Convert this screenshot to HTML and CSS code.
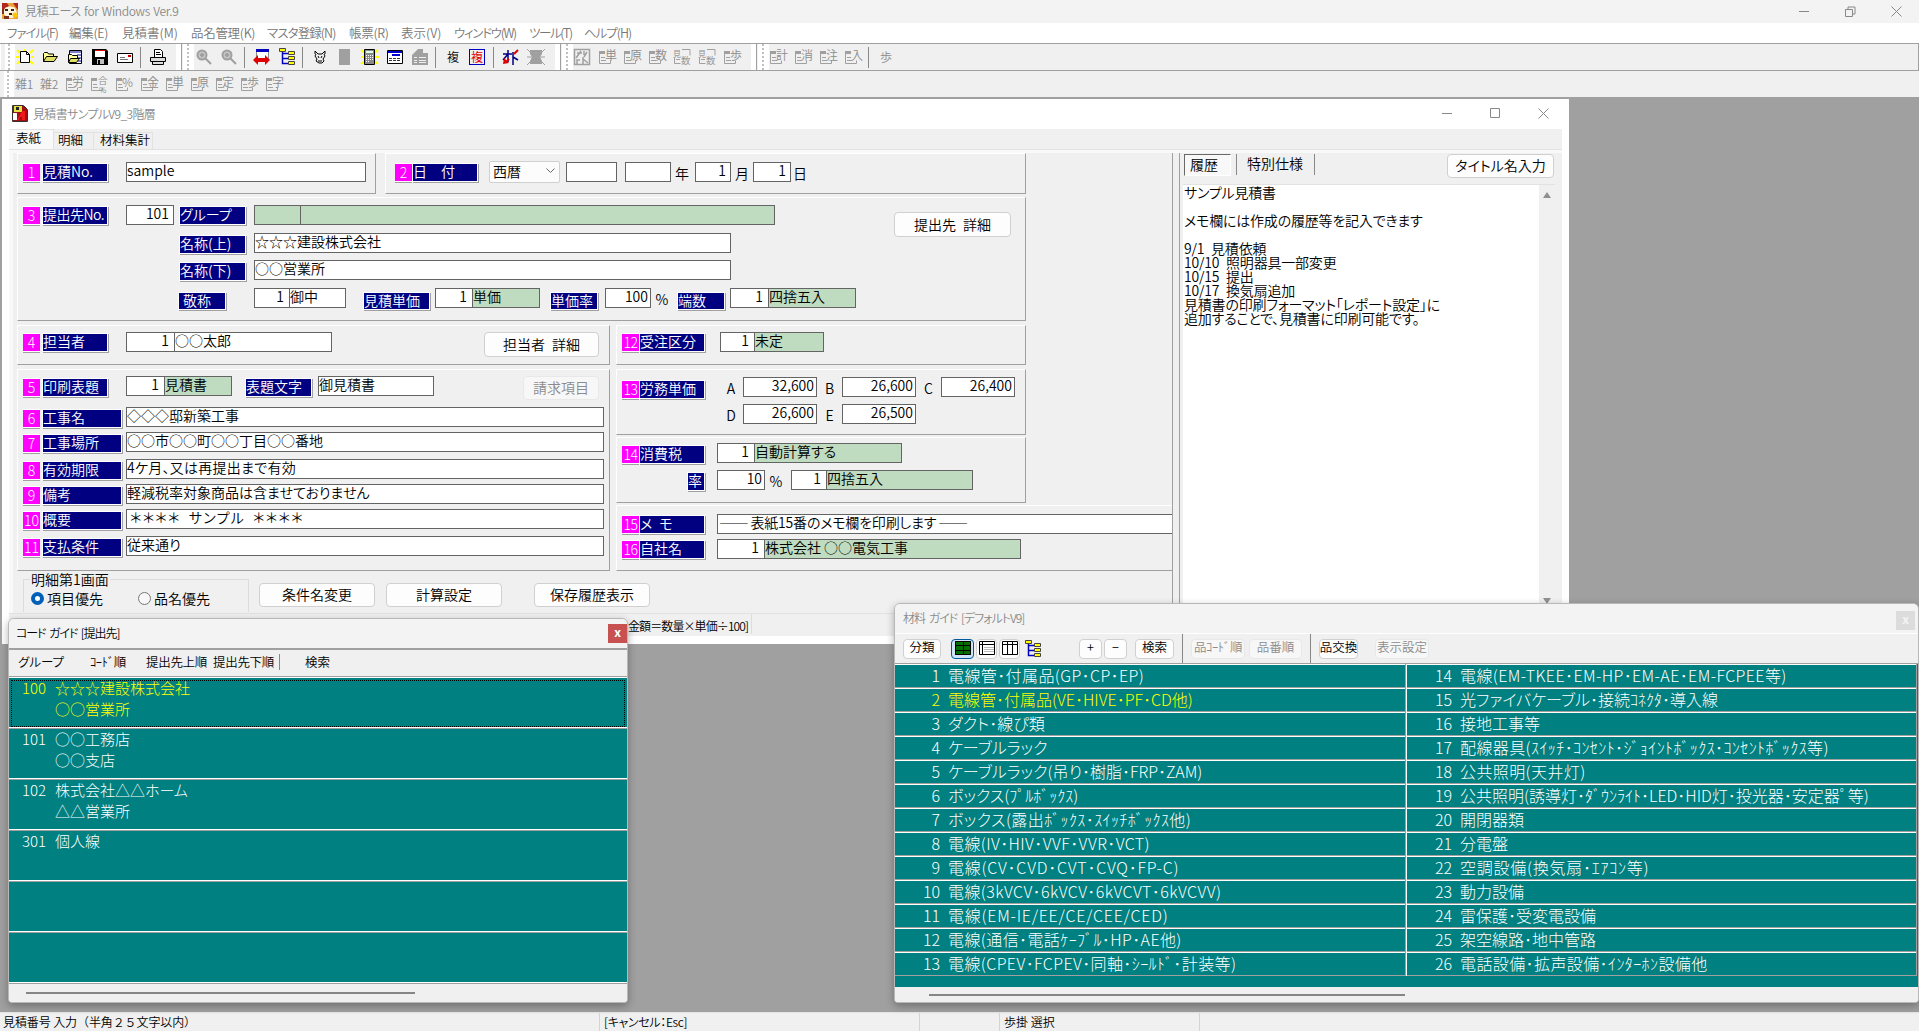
FILE: index.html
```html
<!DOCTYPE html>
<html lang="ja">
<head>
    <meta charset="utf-8">
    <title>見積エース for Windows Ver.9</title>
    <link rel="stylesheet" href="styles.css">
</head>
<body>
    <svg width="0" height="0" class="defs">
        <symbol id="sheet" viewBox="0 0 18 16"><path d="M1.500 3v11.500h11v-3M3 8.500h4M3 11.500h5" fill="none" stroke="#a0a0a0"/><path d="M1 2h6v3H1z" fill="#a0a0a0"/></symbol>
        <symbol id="lens" viewBox="0 0 18 16"><circle cx="7" cy="6" r="4.500" fill="#c4c4c4" stroke="#a0a0a0" stroke-width="2"/><path d="M5 6h4M7 4v4M10 9l6 6" stroke="#a0a0a0" stroke-width="2"/></symbol>
        <symbol id="tree" viewBox="0 0 16 18"><path d="M3.500 4v11.500H9M3.500 5.500H9M3.500 10.500H9" fill="none" stroke="#0000c0" stroke-width="1.500"/><path d="M.5.500h6v3h-6zM9.500 3.500h6v3h-6zM9.500 8.500h6v3h-6zM9.500 13.500h6v3h-6z" fill="#ff0" stroke="#444"/></symbol>
    </svg>

    <header class="titlebar">
        <svg width="16" height="16"><rect width="16" height="16" fill="#e8a33c"/><path d="M0 0h5l2 3L4 5 0 8zM11 0h5v7l-3-4z" fill="#b3261e"/><path d="M3 5c3-2 7-2 10 0l2 5-4 5H5L1 10z" fill="#fff4df"/><path d="M3 6h3v2H3zM9 6h3v2H9zM7 10h3v2H7z" fill="#3a2416"/><path d="M0 6h2v5H0zM2 13h5v3H2z" fill="#803018"/><circle cx="13" cy="12" r="2.500" fill="#ffc400"/></svg>
        <span class="fit-title">見積エース for Windows Ver.9</span>
        <div class="controls">
            <svg width="11" height="11"><path d="M0 5.500h10" stroke="#888"/></svg>
            <svg width="11" height="11"><path d="M.5 3.500h7v7h-7zM3 3V1h7v7H8" fill="none" stroke="#888"/></svg>
            <svg width="11" height="11"><path d="M.5.500l10 10M10.500.500l-10 10" stroke="#888"/></svg>
        </div>
    </header>
    <nav class="menubar">
        <span class="m1">ファイル(F)</span><span class="m2">編集(E)</span><span class="m3">見積書(M)</span><span class="m4">品名管理(K)</span><span class="m5">マスタ登録(N)</span><span class="m6">帳票(R)</span><span class="m7">表示(V)</span><span class="m8">ウィンドウ(W)</span><span class="m9">ツール(T)</span><span class="m10">ヘルプ(H)</span>
    </nav>

    <div class="toolbar">
        <div class="group g1">
            <i class="grip"></i>
            <svg class="ic" viewBox="0 0 18 16"><path d="M1 1l3 3M17 1l-3 3M1 15l3-3M17 15l-3-3M9 0v2M0 8h3M15 8h3" stroke="#ff0" stroke-width="2"/><path d="M4.500 2.500h6l3 3v8h-9zM10.500 2.500v3h3" fill="#fff" stroke="#000"/></svg>
            <svg class="ic" viewBox="0 0 18 16"><path d="M2.500 12.500v-8l1-1h3l1 1.500h5v3" fill="#ffff9c" stroke="#000"/><path d="M2.500 12.500l3-5h11l-3.500 5z" fill="#e0e068" stroke="#000"/></svg>
            <svg class="ic" viewBox="0 0 18 16"><path d="M3.500 1.500h12v13h-12z" fill="#fff" stroke="#000"/><path d="M4 3h11M11 6h4M11 9h4M12 12h3" stroke="#0000a0"/><path d="M2.500 13.500v-8h3l1 1h5v3" fill="#ffff9c" stroke="#000"/><path d="M2.500 13.500l2-4h9l-3 4z" fill="#e0e068" stroke="#000"/></svg>
            <svg class="ic" viewBox="0 0 18 16"><path d="M1 0h14l2 2v14H1z" fill="#000"/><path d="M4 1h10v7H4z" fill="#fff"/><path d="M4 1h10v1H4z" fill="#e00000"/><path d="M6 10h7v5H6z" fill="#c0c0c0"/><path d="M7 11h2v4H7z"/></svg>
            <svg class="ic" viewBox="0 0 18 16"><path d="M1.500 4.500h15v9h-15z" fill="#fff" stroke="#000"/><path d="M4 8.500h5M4 10.500h8" stroke="#777"/><path d="M12 6h3v2h-3z" fill="#c00000"/></svg>
            <i class="sep"></i>
            <svg class="ic" viewBox="0 0 18 16"><path d="M5.500 8.500v-8h6l2 2v6" fill="#fff" stroke="#000"/><path d="M7 3.500h4M7 5.500h5" stroke="#000"/><path d="M1.500 8.500h15v4h-15zM3.500 12.500h11v3h-11z" fill="#ddd" stroke="#000"/></svg>
        </div>
        <div class="group g2">
            <i class="grip"></i>
            <svg class="ic"><use href="#lens"/></svg>
            <svg class="ic"><use href="#lens"/></svg>
            <i class="sep"></i>
            <svg class="ic" viewBox="0 0 18 16"><path d="M3.500.500h12v9h-12z" fill="#fff" stroke="#888"/><path d="M3 0h13v3H3z" fill="#0000c0"/><path d="M0 11l5-5v3h7V6l5 5-5 5v-3H5v3z" fill="#e00000"/></svg>
            <svg class="ic tall"><use href="#tree"/></svg>
            <i class="sep"></i>
            <svg class="ic" viewBox="0 0 18 16"><path d="M4 2l3 3h4l3-3M5 5l-1 2 2 3-1 2 3 2h3l2-2-1-2 2-3-1-2M7 7l1 2M11 7l-1 2M7 12h4M4 2v3M14 2v3" fill="none" stroke="#000"/></svg>
            <svg class="ic" viewBox="0 0 18 16"><path d="M3 0h11v16H3z" fill="#a0a0a0"/></svg>
            <svg class="ic" viewBox="0 0 18 16"><path d="M0 1l17 14M17 1L0 15M0 8h18" stroke="#ff0" stroke-width="2"/><path d="M3.500.500h10v15h-10z" fill="#888" stroke="#000"/><path d="M5 2h7v2H5z" fill="#dfe"/><path d="M5 6.500h7M5 8.500h7M5 10.500h7M5 12.500h3" stroke="#fff" stroke-dasharray="1 1"/></svg>
            <svg class="ic" viewBox="0 0 18 16"><path d="M1.500 1.500h15v13h-15z" fill="#fff" stroke="#000"/><path d="M2 3h14M6 6h8" stroke="#0000d0" stroke-width="2"/><path d="M3 9.500h12M3 11.500h12" stroke="#333" stroke-dasharray="3 1"/></svg>
            <svg class="ic" viewBox="0 0 18 16"><path d="M1 6l6-6h5v4h5v12H1z" fill="#a0a0a0"/><path d="M3 8.500h3M8 8.500h7M3 11.500h3M8 11.500h7M3 13.500h3M8 13.500h7" stroke="#eee"/></svg>
            <i class="sep"></i>
            <span class="kanji">複</span>
            <span class="kanji boxed"><b>複</b></span>
            <i class="sep"></i>
            <svg class="ic" viewBox="0 0 18 16"><path d="M1 5h9M6 1v12M6 5l-5 6M11 3v13M11 8l5 3" stroke="#000080" stroke-width="1.500" fill="none"/><path d="M16 1l-4 4M7 10l-3 3" stroke="#e00000" stroke-width="2"/><path d="M1 15l1-6 5 5z" fill="#e00000"/></svg>
            <svg class="ic" viewBox="0 0 18 16"><path d="M3 1h12v4l-2 3 2 4v3H3v-3l2-4-2-3z" fill="#a0a0a0"/><path d="M0 0l4 4M18 0l-4 4M0 16l4-4M18 16l-4-4M0 8h18" stroke="#a0a0a0"/></svg>
        </div>
        <div class="group g3">
            <i class="grip"></i>
            <svg class="ic" viewBox="0 0 18 16"><path d="M1.500.500h15v15h-15zM4 4h5M8 2L3 9M11 2v4M10 8v7M10 10l5 4M4 15v-4h3M14 3l-3 5" fill="none" stroke="#a0a0a0" stroke-width="1.500"/></svg>
            <svg class="ic"><use href="#sheet"/><text x="7" y="11">単</text></svg>
            <svg class="ic"><use href="#sheet"/><text x="7" y="11">原</text></svg>
            <svg class="ic"><use href="#sheet"/><text x="7" y="11">数</text></svg>
            <svg class="ic"><path d="M9 .5h8v6M1.500 9v5.500h6M3 10.500h4" fill="none" stroke="#a0a0a0"/><text x="0" y="8" class="tiny">見</text><text x="8" y="15" class="small">数</text></svg>
            <svg class="ic"><path d="M9 .5h8v6M1.500 9v5.500h6M3 10.500h4" fill="none" stroke="#a0a0a0"/><text x="0" y="8" class="tiny">見</text><text x="8" y="15" class="small">数</text></svg>
            <svg class="ic"><use href="#sheet"/><text x="7" y="11">歩</text></svg>
        </div>
        <div class="group g4">
            <i class="grip"></i>
            <svg class="ic"><use href="#sheet"/><text x="7" y="11">計</text></svg>
            <svg class="ic"><use href="#sheet"/><text x="7" y="11">消</text></svg>
            <svg class="ic"><use href="#sheet"/><text x="7" y="11">注</text></svg>
            <svg class="ic"><use href="#sheet"/><text x="7" y="11">入</text></svg>
            <i class="sep"></i>
            <span class="kanji off">歩</span>
        </div>
    </div>
    <div class="toolbar second">
        <i class="grip"></i>
        <span class="kanji off wide">雑1</span>
        <span class="kanji off wide">雑2</span>
        <svg class="ic"><use href="#sheet"/><text x="7" y="11">労</text></svg>
        <svg class="ic"><use href="#sheet"/><text x="8" y="8" class="small">合</text><text x="9" y="17" class="tiny">%</text></svg>
        <svg class="ic"><use href="#sheet"/><text x="7" y="11">%</text></svg>
        <svg class="ic"><use href="#sheet"/><text x="7" y="11">金</text></svg>
        <svg class="ic"><use href="#sheet"/><text x="7" y="11">単</text></svg>
        <svg class="ic"><use href="#sheet"/><text x="7" y="11">原</text></svg>
        <svg class="ic"><use href="#sheet"/><text x="7" y="11">定</text></svg>
        <svg class="ic"><use href="#sheet"/><text x="7" y="11">歩</text></svg>
        <svg class="ic"><use href="#sheet"/><text x="7" y="11">字</text></svg>
    </div>

    <main class="desktop">
        <!-- 見積書 -->
        <section class="window estimate">
            <div class="caption">
                <svg width="16" height="17"><path d="M1 1h11l3 3v12H1z" fill="#a01010"/><path d="M2 1h8v6H2z" fill="#e8e040"/><path d="M4 2h3v3H4z" fill="#222"/><path d="M5 15l5-9h3v9h-3v-3H8l-1 3z" fill="#f01818"/><path d="M1 8h4v7H1z" fill="#fff"/><path d="M.5.500h11l4 4v12H.500z" fill="none" stroke="#333"/></svg>
                <span class="fit-doc">見積書サンプルV9_3階層</span>
                <div class="controls">
                    <svg width="11" height="11"><path d="M0 5.500h10" stroke="#888"/></svg>
                    <svg width="11" height="11"><path d="M.5.500h9v9h-9z" fill="none" stroke="#888"/></svg>
                    <svg width="11" height="11"><path d="M.5.500l10 10M10.500.500l-10 10" stroke="#888"/></svg>
                </div>
            </div>
            <div class="tabs">
                <span class="tab active">表紙</span><span class="tab t2">明細</span><span class="tab t3">材料集計</span>
            </div>
            <div class="page">
                <div class="form">
                    <div class="line">
                        <div class="panel p1">
                            <div class="row">
                                <div class="head"><b>1</b><span class="tag w66">見積No.</span></div>
                                <span class="field w240">sample</span>
                            </div>
                        </div>
                        <div class="panel p2">
                            <div class="row">
                                <div class="head date"><b>2</b><span class="tag w66">日&emsp;付</span></div>
                                <span class="combo">西暦<svg width="9" height="6"><path d="M.5.500l4 4 4-4" fill="none" stroke="#666"/></svg></span>
                                <span class="field year"></span>
                                <span class="field year2"></span><span class="unit nen">年</span>
                                <span class="field num w36">1</span><span class="unit">月</span>
                                <span class="field num w38">1</span><span class="unit nichi">日</span>
                            </div>
                        </div>
                    </div>
                    <div class="panel p3">
                        <div class="rows">
                            <div class="row">
                                <div class="head"><b>3</b><span class="tag w66 tight">提出先No.</span></div>
                                <span class="field num client-no">101</span>
                                <span class="tag w67">グループ</span>
                                <span class="pair group-name"><i class="green"></i><em></em></span>
                            </div>
                            <div class="row indent">
                                <span class="tag w67">名称(上)</span>
                                <span class="field w477">☆☆☆建設株式会社</span>
                            </div>
                            <div class="row indent">
                                <span class="tag w67">名称(下)</span>
                                <span class="field w477">○○営業所</span>
                            </div>
                            <div class="row indent terms">
                                <span class="tag w48 center">敬称</span>
                                <span class="pair title-of"><i>1</i><em class="white">御中</em></span>
                                <span class="tag w67">見積単価</span>
                                <span class="pair unit-price"><i>1</i><em>単価</em></span>
                                <span class="tag w48">単価率</span>
                                <span class="field num rate">100</span><span class="unit">%</span>
                                <span class="tag w48">端数</span>
                                <span class="pair rounding"><i>1</i><em>四捨五入</em></span>
                            </div>
                        </div>
                        <button class="btn client-detail">提出先&ensp;詳細</button>
                    </div>
                    <div class="line cols">
                        <div class="col">
                            <div class="panel p4">
                                <div class="row">
                                    <div class="head"><b>4</b><span class="tag w66">担当者</span></div>
                                    <span class="pair person"><i>1</i><em class="white">○○太郎</em></span>
                                    <button class="btn person-detail">担当者&ensp;詳細</button>
                                </div>
                            </div>
                            <div class="panel p5">
                                <div class="row">
                                    <div class="head"><b>5</b><span class="tag w66">印刷表題</span></div>
                                    <span class="pair heading"><i>1</i><em>見積書</em></span>
                                    <span class="tag w67 ml">表題文字</span>
                                    <span class="field heading-text">御見積書</span>
                                    <button class="btn billing" disabled>請求項目</button>
                                </div>
                                <div class="row"><div class="head"><b>6</b><span class="tag w80">工事名</span></div><span class="field w478">◇◇◇邸新築工事</span></div>
                                <div class="row"><div class="head"><b>7</b><span class="tag w80">工事場所</span></div><span class="field w478">○○市○○町○○丁目○○番地</span></div>
                                <div class="row"><div class="head"><b>8</b><span class="tag w80">有効期限</span></div><span class="field w478 term">4ケ月、又は再提出まで有効</span></div>
                                <div class="row"><div class="head"><b>9</b><span class="tag w80">備考</span></div><span class="field w478">軽減税率対象商品は含ませておりません</span></div>
                                <div class="row"><div class="head"><b>10</b><span class="tag w80">概要</span></div><span class="field w478 stars">＊＊＊＊&ensp;サンプル&ensp;＊＊＊＊</span></div>
                                <div class="row"><div class="head"><b>11</b><span class="tag w80">支払条件</span></div><span class="field w478">従来通り</span></div>
                            </div>
                        </div>
                        <div class="col right">
                            <div class="panel p12">
                                <div class="row">
                                    <div class="head"><b>12</b><span class="tag w66">受注区分</span></div>
                                    <span class="pair order"><i>1</i><em>未定</em></span>
                                </div>
                            </div>
                            <div class="panel p13">
                                <div class="head"><b>13</b><span class="tag w66">労務単価</span></div>
                                <div class="labor">
                                    <span>A</span><span class="field num">32,600</span>
                                    <span>B</span><span class="field num">26,600</span>
                                    <span>C</span><span class="field num">26,400</span>
                                    <span>D</span><span class="field num">26,600</span>
                                    <span>E</span><span class="field num">26,500</span>
                                </div>
                            </div>
                            <div class="panel p14">
                                <div class="row">
                                    <div class="head"><b>14</b><span class="tag w66">消費税</span></div>
                                    <span class="pair tax"><i>1</i><em>自動計算する</em></span>
                                </div>
                                <div class="row">
                                    <div class="head rate-head"><span class="tag">率</span></div>
                                    <span class="field num w48">10</span><span class="unit">%</span>
                                    <span class="pair tax-round"><i>1</i><em>四捨五入</em></span>
                                </div>
                            </div>
                            <div class="panel p15">
                                <div class="row">
                                    <div class="head"><b>15</b><span class="tag w66">メ&ensp;モ</span></div>
                                    <span class="field memo-line">── 表紙15番のメモ欄を印刷します ──</span>
                                </div>
                                <div class="row">
                                    <div class="head"><b>16</b><span class="tag w66">自社名</span></div>
                                    <span class="pair company"><i>1</i><em>株式会社 ○○電気工事</em></span>
                                </div>
                            </div>
                        </div>
                    </div>
                    <div class="line foot">
                        <fieldset>
                            <legend>明細第1画面</legend>
                            <label><span class="radio on"></span>項目優先</label>
                            <label><span class="radio"></span>品名優先</label>
                        </fieldset>
                        <button class="btn">条件名変更</button>
                        <button class="btn">計算設定</button>
                        <button class="btn">保存履歴表示</button>
                    </div>
                </div>
                <aside class="notes">
                    <div class="notes-bar">
                        <span class="pressed">履歴</span><span class="plain">特別仕様</span>
                        <button class="btn">タイトル名入力</button>
                    </div>
                    <div class="notes-text">
                        <pre>サンプル見積書

メモ欄には作成の履歴等を記入できます

9/1&ensp;見積依頼
10/10&ensp;照明器具一部変更
10/15&ensp;提出
10/17&ensp;換気扇追加
見積書の印刷フォーマット「レポート設定」に
追加することで、見積書に印刷可能です。</pre>
                        <div class="vbar"><svg width="8" height="6"><path d="M4 0l4 6H0z" fill="#909090"/></svg><svg width="8" height="6"><path d="M4 6l4-6H0z" fill="#909090"/></svg></div>
                    </div>
                </aside>
            </div>
            <div class="sheet-tabs"><span>金額＝数量×単価÷100]</span></div>
        </section>

        <!-- コードガイド -->
        <section class="window code-guide">
            <div class="caption"><span>コード ガイド [提出先]</span><span class="close">x</span></div>
            <div class="bar">
                <span class="c1">グループ</span><span class="c2">ｺｰﾄﾞ順</span><span class="c3">提出先上順</span><span class="c4">提出先下順</span><i class="sep"></i><span class="c5">検索</span>
            </div>
            <div class="list">
                <div class="entry current"><span>100</span><p>☆☆☆建設株式会社<br>○○営業所</p></div>
                <div class="entry"><span>101</span><p>○○工務店<br>○○支店</p></div>
                <div class="entry"><span>102</span><p>株式会社△△ホーム<br>△△営業所</p></div>
                <div class="entry"><span>301</span><p>個人線</p></div>
                <div class="entry"></div>
                <div class="entry"></div>
            </div>
            <div class="hbar"><i></i></div>
        </section>

        <!-- 材料ガイド -->
        <section class="window material">
            <div class="caption"><span>材料 ガイド [デフォルトV9]</span><span class="close">x</span></div>
            <div class="bar">
                <button class="btn b1">分類</button>
                <button class="btn b2"><svg width="16" height="14"><path d="M0 0h16v14H0z" fill="#007000"/><path d="M.5.500h15v13H.500zM0 4.500h16M0 9.500h16M8.500 0v14" fill="none" stroke="#000"/></svg></button>
                <button class="btn b3"><svg width="16" height="14"><path d="M.5.500h15v13H.500zM0 3.500h16M3.500 0v14" fill="#fff" stroke="#000"/><path d="M5 6.500h10M5 8.500h10M5 10.500h10" stroke="#bbb"/></svg></button>
                <button class="btn b4"><svg width="16" height="14"><path d="M.5.500h15v13H.500zM0 3.500h16M5.500 0v14M10.500 0v14" fill="#fff" stroke="#000"/></svg></button>
                <svg class="b5" width="18" height="18"><use href="#tree"/></svg>
                <button class="btn b6">+</button>
                <button class="btn b7">−</button>
                <button class="btn b8">検索</button>
                <i class="sep"></i>
                <button class="btn b9" disabled>品ｺｰﾄﾞ順</button>
                <button class="btn b10" disabled>品番順</button>
                <i class="sep s2"></i>
                <button class="btn b11">品交換</button>
                <button class="btn b12" disabled>表示設定</button>
            </div>
            <div class="table">
                <ol>
                    <li><span>1</span><em class="ls4">電線管･付属品(GP･CP･EP)</em></li>
                    <li class="current"><span>2</span><em>電線管･付属品(VE･HIVE･PF･CD他)</em></li>
                    <li><span>3</span><em>ダクト･線ぴ類</em></li>
                    <li><span>4</span><em>ケーブルラック</em></li>
                    <li><span>5</span><em>ケーブルラック(吊り･樹脂･FRP･ZAM)</em></li>
                    <li><span>6</span><em>ボックス(ﾌﾟﾙﾎﾞｯｸｽ)</em></li>
                    <li><span>7</span><em class="ls4">ボックス(露出ﾎﾞｯｸｽ･ｽｲｯﾁﾎﾞｯｸｽ他)</em></li>
                    <li><span>8</span><em class="ls4">電線(IV･HIV･VVF･VVR･VCT)</em></li>
                    <li><span>9</span><em class="ls7">電線(CV･CVD･CVT･CVQ･FP-C)</em></li>
                    <li><span>10</span><em class="ls4">電線(3kVCV･6kVCV･6kVCVT･6kVCVV)</em></li>
                    <li><span>11</span><em class="ls7">電線(EM-IE/EE/CE/CEE/CED)</em></li>
                    <li><span>12</span><em class="ls4">電線(通信･電話ｹｰﾌﾞﾙ･HP･AE他)</em></li>
                    <li><span>13</span><em class="ls4">電線(CPEV･FCPEV･同軸･ｼｰﾙﾄﾞ･計装等)</em></li>
                </ol>
                <ol>
                    <li><span>14</span><em class="ls4">電線(EM-TKEE･EM-HP･EM-AE･EM-FCPEE等)</em></li>
                    <li><span>15</span><em>光ファイバケーブル･接続ｺﾈｸﾀ･導入線</em></li>
                    <li><span>16</span><em>接地工事等</em></li>
                    <li><span>17</span><em class="ls4">配線器具(ｽｲｯﾁ･ｺﾝｾﾝﾄ･ｼﾞｮｲﾝﾄﾎﾞｯｸｽ･ｺﾝｾﾝﾄﾎﾞｯｸｽ等)</em></li>
                    <li><span>18</span><em class="ls4">公共照明(天井灯)</em></li>
                    <li><span>19</span><em>公共照明(誘導灯･ﾀﾞｳﾝﾗｲﾄ･LED･HID灯･投光器･安定器ﾟ等)</em></li>
                    <li><span>20</span><em>開閉器類</em></li>
                    <li><span>21</span><em>分電盤</em></li>
                    <li><span>22</span><em class="ls7">空調設備(換気扇･ｴｱｺﾝ等)</em></li>
                    <li><span>23</span><em>動力設備</em></li>
                    <li><span>24</span><em>雷保護･受変電設備</em></li>
                    <li><span>25</span><em>架空線路･地中管路</em></li>
                    <li><span>26</span><em class="ls4">電話設備･拡声設備･ｲﾝﾀｰﾎﾝ設備他</em></li>
                </ol>
            </div>
            <div class="hbar"><i></i></div>
        </section>
    </main>

    <footer class="statusbar">
        <span class="s1">見積番号 入力（半角２５文字以内）</span><span class="s2">[キャンセル：Esc]</span><span class="s3"></span><span class="s4">歩掛 選択</span><span></span>
    </footer>
</body>
</html>
```
FILE: styles.css
```css
* {
    box-sizing: border-box;
}

body {
    margin: 0;
    width: 1919px;
    height: 1031px;
    overflow: hidden;
    display: flex;
    flex-direction: column;
    background: #f0f0f0;
    color: #000;
    font-family: "Noto Sans CJK JP", sans-serif;
    font-size: 14px;
    font-weight: 350;
    line-height: 18px;
    font-feature-settings: "palt";
    white-space: nowrap;
}

i, em {
    font-style: normal;
}

svg {
    flex: none;
    display: block;
}

.defs {
    position: absolute;
}

/* frame */
.titlebar {
    height: 23px;
    flex: none;
    display: flex;
    align-items: center;
    padding: 0 17px 1px 2px;
    gap: 7px;
    background: #f3f3f3;
    color: #8a8a8a;
    font-size: 12px;
}

.fit-title { letter-spacing: -.35px; word-spacing: 1px; }
.fit-doc { letter-spacing: -.65px; }

.controls {
    margin-left: auto;
    display: flex;
    gap: 35px;
}

.menubar {
    height: 20px;
    flex: none;
    display: flex;
    padding-left: 7px;
    background: #fff;
    color: #777;
    font-size: 12.5px;
    line-height: 19px;
}

.menubar span { flex: none; }
.m1 { width: 62px; letter-spacing: -1.1px; }
.m2 { width: 53px; letter-spacing: -.3px; }
.m3 { width: 69px; }
.m4 { width: 76px; letter-spacing: -.3px; }
.m5 { width: 82px; letter-spacing: -.9px; }
.m6 { width: 52px; letter-spacing: -.3px; }
.m7 { width: 53px; }
.m8 { width: 75px; letter-spacing: -1.3px; }
.m9 { width: 55px; letter-spacing: -1.4px; }
.m10 { letter-spacing: -1px; }

.toolbar {
    height: 28px;
    flex: none;
    display: flex;
    border-top: 1px solid #a0a0a0;
    border-bottom: 1px solid #a0a0a0;
    background: #f0f0f0;
}

.toolbar.second {
    height: 27px;
    border-top: 0;
    align-items: center;
    padding: 0 0 1px 4px;
}

.group {
    display: flex;
    align-items: center;
    border-left: 1px solid #fff;
    border-right: 1px solid #a0a0a0;
    box-shadow: inset -5px 0 #fff;
}

.g1 { width: 182px; padding-left: 4px; }
.g2 { width: 378px; margin-left: 1px; }
.g3 { width: 195px; margin-left: 1px; }
.g4 { flex: 1; margin-left: 1px; box-shadow: none; }

.grip {
    width: 10px;
    height: 26px;
    flex: none;
    margin-right: 1px;
    background: #fff;
    border-right: 5px solid #fff;
    border-left: 3px solid #fff;
    background-image: repeating-linear-gradient(#c0c0c0 0 2px, #fff 2px 4px);
    background-clip: padding-box;
}

.g3 .grip, .g4 .grip { margin-right: 0; }

.ic {
    width: 18px;
    height: 16px;
    margin-right: 7px;
    overflow: visible;
}

.ic text {
    font-size: 12px;
    fill: #8c8c8c;
}

.ic text.small { font-size: 9.5px; }
.ic text.tiny { font-size: 8px; }
.ic.tall { height: 18px; }

.toolbar .sep {
    width: 1px;
    height: 21px;
    flex: none;
    margin: 0 8px 0 -1px;
    background: #888;
}

.kanji {
    width: 18px;
    flex: none;
    margin-right: 7px;
    font-size: 12px;
    line-height: 16px;
    text-align: center;
}

.kanji.off { color: #8c8c8c; }
.kanji.wide { text-align: left; letter-spacing: -.3px; }

.boxed b {
    display: block;
    width: 16px;
    border: 1px solid #0000c0;
    color: #e00000;
    font-weight: 400;
    line-height: 14px;
}

.desktop {
    flex: 1;
    position: relative;
    background: #a0a0a0;
}

.statusbar {
    height: 19px;
    flex: none;
    display: flex;
    border-top: 1px solid #e4e4e4;
    font-size: 12px;
    line-height: 17px;
}

.statusbar span {
    padding-left: 3px;
    border-right: 1px solid #d4d4d4;
}

.statusbar span + span { padding-left: 4px; }
.s1 { width: 600px; font-feature-settings: normal; letter-spacing: -.1px; }
.statusbar .s2 { width: 320px; letter-spacing: -.35px; }
.s3 { width: 80px; }
.s4 { width: 200px; }
.statusbar span:last-child { border: 0; }

/* windows */
.window {
    position: absolute;
    display: flex;
    flex-direction: column;
    background: #f0f0f0;
}

.caption {
    flex: none;
    display: flex;
    align-items: center;
    font-size: 12px;
}

.btn {
    flex: none;
    padding: 0 0 2px;
    border: 1px solid #d0d0d0;
    border-radius: 4px;
    background: #fdfdfd;
    color: #000;
    font: inherit;
    line-height: 1;
    text-align: center;
    display: flex;
    align-items: center;
    justify-content: center;
}

.btn:disabled {
    color: #8c8c8c;
    border-color: #e8e8e8;
    background: #f7f7f7;
}

.estimate {
    left: 2px;
    top: 1px;
    width: 1567px;
    height: 545px;
    background: #fff;
    padding: 0 7px;
}

.estimate .caption {
    height: 30px;
    padding: 0 13px 1px 3px;
    gap: 5px;
    color: #8a8a8a;
}

.estimate .controls { gap: 37px; }

.tabs {
    height: 20px;
    flex: none;
    display: flex;
    align-items: flex-end;
    background: #f0f0f0;
}

.tab {
    width: 40px;
    height: 17px;
    padding-left: 4px;
    border: solid #e2e2e2;
    border-width: 1px 1px 0 0;
    line-height: 14px;
    font-size: 12.5px;
}

.tab.active {
    width: 45px;
    height: 20px;
    padding-left: 7px;
    background: #f9f9f9;
    line-height: 15px;
}

.tab.t3 {
    width: 59px;
    padding-left: 6px;
}

.page {
    height: 465px;
    flex: none;
    display: flex;
    padding: 3px 0 0 8px;
    border: 1px solid #e2e2e2;
    border-width: 1px 0;
    background: linear-gradient(#f9f9f9 3px, #f0f0f0 3px);
    box-shadow: inset 4px 0 #f9f9f9;
}

.form {
    width: 1156px;
    flex: none;
    border-right: 1px solid #a0a0a0;
}

.line {
    display: flex;
}

.panel {
    width: 1009px;
    border: 1px solid;
    border-color: #fff #a0a0a0 #a0a0a0 #fff;
    padding-left: 5px;
}

.p1 { width: 359px; height: 41px; padding-top: 8px; }
.p2 { width: 641px; height: 41px; margin-left: 9px; padding: 8px 0 0 9px; }
.p3 { height: 124px; margin-top: 3px; padding-top: 7px; display: flex; }
.p4 { width: 593px; height: 40px; padding-top: 6px; }
.p5 { width: 593px; height: 202px; margin-top: 4px; padding-top: 6px; }
.p12 { width: 410px; height: 40px; padding-top: 6px; }
.p13 { width: 410px; height: 66px; margin-top: 4px; padding-top: 7px; display: flex; }
.p14 { width: 410px; height: 66px; margin-top: 2px; padding-top: 5px; }
.p15 { width: 556px; height: 66px; margin-top: 2px; padding-top: 8px; border-right: 0; }

.cols { margin-top: 4px; }
.col.right { margin-left: 6px; }

.row {
    display: flex;
    align-items: flex-start;
    height: 20px;
}

.head {
    width: 103px;
    flex: none;
    display: flex;
    gap: 2px;
    margin-top: 1px;
}

.right .head {
    width: 95px;
    gap: 0;
}

.head.date { width: 94px; gap: 0; }
.p12 .row .head { width: 98px; }
.right .head.rate-head { padding-left: 65px; }
.rate-head .tag { width: 18px; }

.head b {
    width: 17px;
    height: 19px;
    flex: none;
    background: #f0f;
    color: #fff;
    font-weight: 300;
    line-height: 16px;
    text-align: center;
    border: 1px solid #fff;
    border-width: 1px 0;
    box-shadow: 0 1px #a0a0a0;
}

.right .head b { letter-spacing: -.5px; }

.tag {
    height: 19px;
    flex: none;
    background: #000080;
    color: #fff;
    border: 1px solid #fff;
    box-shadow: 1px 1px #a0a0a0;
    line-height: 15px;
}

.tag.tight { letter-spacing: -.5px; }
.tag.center { padding-left: 4px; }
.row > .tag { margin-top: 2px; }

.w66 { width: 66px; }
.w67 { width: 67px; }
.w80 { width: 80px; }
.w48 { width: 48px; }
.w36 { width: 36px; }
.w38 { width: 38px; }
.w240 { width: 240px; }
.w477 { width: 477px; }
.w478 { width: 478px; }

.field, .pair {
    height: 20px;
    flex: none;
    border: 1px solid #646464;
    background: #fff;
    line-height: 15px;
}

.field { padding: 0 2px 0 0; }
.num { text-align: right; }

.pair {
    display: flex;
}

.pair i {
    flex: none;
    padding-right: 5px;
    text-align: right;
}

.pair i.green { background: #c0dcc0; }

.pair em {
    flex: 1;
    border-left: 1px solid #646464;
    background: #c0dcc0;
}

.pair em.white { background: #fff; }

.unit {
    width: 14px;
    flex: none;
    margin: 2px 4px 0 4px;
    text-align: center;
    line-height: 18px;
}

.combo {
    width: 71px;
    height: 22px;
    margin: -1px 6px 0 0;
    padding: 0 4px 2px 3px;
    display: flex;
    align-items: center;
    justify-content: space-between;
    border: 1px solid #d0d0d0;
    border-radius: 2px;
    background: #fcfcfc;
}

.year { width: 51px; }
.year2 { width: 46px; margin-left: 8px; }
.unit.nen { margin-right: 6px; }
.unit.nichi { margin-left: 2px; }
.p2 .num { padding-right: 4px; }

.p3 .rows { width: 871px; }
.p3 .row { margin-bottom: 8px; }
.p3 .row:nth-child(2) { margin-bottom: 7px; }
.p3 .row:first-child > .tag { margin-top: 1px; }
.client-no { width: 48px; margin-right: 5px; padding-right: 4px; }
.group-name { width: 521px; margin-left: 8px; }
.group-name i { width: 45px; }
.indent { padding-left: 156px; }
.indent .field { margin-left: 8px; }
.indent .tag { margin-top: 2px; }
.terms { padding-left: 155px; }
.terms .tag { margin-top: 4px; height: 18px; }
.title-of { width: 92px; margin: 0 17px 0 28px; }
.title-of i { width: 34px; }
.unit-price { width: 105px; margin: 0 10px 0 5px; }
.unit-price i { width: 36px; }
.terms .rate { width: 46px; margin-left: 7px; }
.terms .unit { margin-right: 8px; }
.rounding { width: 126px; margin-left: 5px; }
.rounding i { width: 37px; }
.client-detail { width: 117px; height: 25px; margin-top: 7px; }

.person { width: 206px; }
.person i { width: 47px; }
.person-detail { width: 115px; height: 25px; margin-left: 152px; }

.heading { width: 106px; }
.heading i { width: 37px; }
.tag.ml { margin-left: 13px; }
.heading-text { width: 116px; margin-left: 6px; }
.billing { width: 76px; height: 24px; margin-left: 89px; }
.p5 .row { margin-bottom: 5px; }
.p5 .row:first-child { margin-bottom: 11px; }
.p5 .row:nth-child(3), .p5 .row:nth-child(6) { margin-bottom: 7px; }
.p5 .head { margin-top: 2px; }

.term { letter-spacing: .25px; }
.stars { padding-left: 3px; letter-spacing: 1.2px; }

.order { width: 104px; }
.order i { width: 33px; }

.labor {
    display: grid;
    grid-template-columns: 26px 74px 25px 74px 25px 74px;
    grid-template-rows: 20px 20px;
    row-gap: 7px;
    align-content: start;
}

.labor > span:not(.field) {
    padding-top: 2px;
    text-align: center;
}

.labor > span:nth-child(1), .labor > span:nth-child(7) {
    padding-left: 2px;
}

.p13 .head { margin-top: 3px; }
.p14 .head { margin-top: 2px; }
.p14 .row { margin-bottom: 7px; }
.tax { width: 185px; }
.tax i { width: 36px; }
.p14 .unit { margin-right: 8px; }
.tax-round { width: 182px; }
.tax-round i { width: 34px; }
.p15 .row { margin-bottom: 5px; }
.memo-line { flex: 1; border-right: 0; padding-left: 2px; letter-spacing: -.2px; }
.company { width: 304px; }
.company i { width: 46px; }

.foot {
    padding-left: 6px;
}

fieldset {
    width: 226px;
    height: 41px;
    margin: 0 10px 0 0;
    padding: 0 0 0 7px;
    border: 1px solid #dcdcdc;
    border-bottom: 0;
    display: flex;
    line-height: 16px;
}

legend {
    height: 16px;
    margin-left: -1px;
    padding: 0 1px;
}

fieldset label {
    width: 107px;
    display: flex;
    align-items: center;
    gap: 3px;
    height: 22px;
}

.radio {
    width: 13px;
    height: 13px;
    border: 1px solid #777;
    border-radius: 50%;
    background: #f8f8f8;
}

.radio.on {
    border: 4px solid #005fb8;
    background: #fff;
}

.foot .btn {
    width: 116px;
    height: 24px;
    margin: 12px 11px 0 0;
}

.foot .btn:last-child { margin-left: 21px; }

.notes {
    flex: 1;
    margin-left: 6px;
    padding-left: 3px;
    border-left: 1px solid #a0a0a0;
    display: flex;
    flex-direction: column;
}

.notes-bar {
    height: 31px;
    display: flex;
    align-items: flex-start;
}

.pressed {
    width: 47px;
    height: 22px;
    margin: 1px 0 0 1px;
    padding-left: 5px;
    border: 1px solid;
    border-color: #696969 #fff #fff #696969;
    background: #f8f8f8;
    line-height: 18px;
}

.plain {
    margin: 1px 0 0 5px;
    padding: 0 11px 2px 10px;
    border: 1px solid #888;
    border-width: 0 1px;
    line-height: 19px;
}

.notes-bar .btn {
    width: 107px;
    height: 24px;
    margin: 1px 8px 0 auto;
}

.notes-text {
    flex: 1;
    margin-right: 7px;
    background: #fff;
    border-top: 1px solid #e2e2e2;
    display: flex;
    justify-content: space-between;
}

.notes pre {
    margin: 0 0 0 1px;
    font: inherit;
    line-height: 14px;
    letter-spacing: -.2px;
}

.vbar {
    width: 16px;
    height: 426px;
    padding: 7px 4px;
    display: flex;
    flex-direction: column;
    justify-content: space-between;
    background: #f0f0f0;
}

.sheet-tabs {
    height: 22px;
    padding-left: 619px;
    background: #f0f0f0;
    font-size: 12px;
}

.sheet-tabs span {
    display: inline-block;
    width: 124px;
    height: 20px;
    border-right: 1px solid #dcdcdc;
    line-height: 24px;
    letter-spacing: -.9px;
}

/* code guide */
.code-guide {
    left: 8px;
    top: 520px;
    width: 620px;
    height: 385px;
    border: 1px solid #b8b8b8;
    border-radius: 6px 6px 4px 4px;
    box-shadow: 0 3px 9px rgba(0, 0, 0, .3);
    overflow: hidden;
}

.code-guide .caption {
    height: 31px;
    padding: 0 0 1px 7px;
    background: #f3f3f3;
    border-bottom: 2px solid #a0a0a0;
    letter-spacing: -1.1px;
    word-spacing: 2px;
}

.close {
    width: 19px;
    height: 19px;
    margin-left: auto;
    background: #c75050;
    color: #fff;
    font-size: 12px;
    font-weight: 700;
    line-height: 16px;
    letter-spacing: 0;
    text-align: center;
}

.code-guide .bar {
    height: 27px;
    flex: none;
    padding: 0 0 2px 9px;
    display: flex;
    align-items: center;
    border-bottom: 1px solid #a0a0a0;
    font-size: 12.5px;
}

.c1 { width: 72px; }
.c2 { width: 56px; letter-spacing: -.4px; }
.c3 { width: 67px; letter-spacing: -.3px; }
.c4 { width: 66px; letter-spacing: -.3px; }
.bar .sep {
    width: 1px;
    height: 16px;
    background: #888;
}
.c5 { margin-left: 25px; }

.list {
    height: 307px;
    flex: none;
    background: #008080;
    border-top: 1px solid #fff;
}

.entry {
    height: 51px;
    display: flex;
    padding-left: 13px;
    border-bottom: 1px solid #a0a0a0;
    box-shadow: inset 0 -1px #fff;
    color: #fff;
    font-size: 15px;
    font-weight: 300;
    line-height: 20.5px;
}

.entry span { width: 33px; }
.entry p { margin: 0; }

.entry.current {
    color: #ff0;
    outline: 1px dotted #000;
    outline-offset: -3px;
}

.hbar {
    flex: 1;
    display: flex;
    align-items: center;
    background: #f0f0f0;
}

.hbar i {
    width: 389px;
    height: 2px;
    margin-left: 17px;
    background: #868686;
}

/* material guide */
.material {
    left: 894px;
    top: 505px;
    width: 1025px;
    height: 400px;
    border: 1px solid #b8b8b8;
    border-radius: 6px 6px 4px 4px;
    box-shadow: 0 3px 9px rgba(0, 0, 0, .3);
    overflow: hidden;
}

.material .caption {
    height: 30px;
    padding: 0 3px 1px 8px;
    background: #f3f3f3;
    border-bottom: 1px solid #fff;
    color: #8a8a8a;
    letter-spacing: -1px;
    word-spacing: 2px;
}

.material .close {
    background: #dcdcdc;
    color: #f4f4f4;
    margin-top: 4px;
    letter-spacing: 0;
}

.material .bar {
    height: 30px;
    flex: none;
    display: flex;
    align-items: center;
    padding-left: 8px;
    border-bottom: 1px solid #a0a0a0;
    font-size: 12.5px;
}

.material .btn { height: 20px; }
.b1 { width: 38px; }
.material .b2 { width: 23px; margin-left: 10px; background: #cfe4f7; border: 1px solid #005a9e; }
.b3 { width: 21px; margin-left: 2px; }
.b4 { width: 21px; margin-left: 2px; }
.b5 { margin-left: 4px; }
.b6 { width: 23px; margin-left: 37px; }
.b7 { width: 23px; margin-left: 2px; }
.b8 { width: 39px; margin-left: 8px; }
.material .sep { height: 29px; margin: 0 8px; }
.b9 { width: 54px; letter-spacing: -.4px; }
.b10 { width: 53px; margin-left: 4px; }
.b11 { width: 39px; }
.b12 { width: 54px; margin-left: 17px; }

.table {
    height: 323px;
    flex: none;
    display: grid;
    grid-template-columns: 511px 511px;
    align-content: start;
    background: #008080;
}

.table ol {
    margin: 0;
    padding: 0;
    list-style: none;
    border-right: 1px solid #a0a0a0;
}

.table ol + ol { border-left: 1px solid #fff; }

.table li {
    height: 24px;
    display: flex;
    border-top: 1px solid #fff;
    border-bottom: 1px solid #a0a0a0;
    color: #fff;
    font-size: 16px;
    font-weight: 300;
    line-height: 20px;
}

.table li span {
    width: 45px;
    margin-right: 8px;
    text-align: right;
}

.table li.current { color: #ff0; }

.ls4 { letter-spacing: .4px; }
.ls7 { letter-spacing: .75px; }

.material .hbar i {
    width: 476px;
    margin-left: 34px;
}
```
